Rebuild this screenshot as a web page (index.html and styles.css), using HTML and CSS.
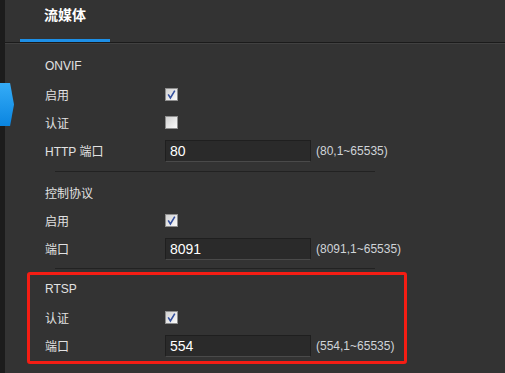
FILE: index.html
```html
<!doctype html>
<html>
<head>
<meta charset="utf-8">
<link rel="stylesheet" href="styles.css">
</head>
<body>
<div class="page">
	<div class="rail"></div>
	<div class="main">
		<div class="tabs">
			<div class="tab on">流媒体</div>
		</div>

		<div class="group first">
			<div class="row title">ONVIF</div>
			<div class="row">
				<span class="lbl">启用</span>
				<span class="chk"><svg width="13" height="13" viewBox="0 0 13 13"><defs><linearGradient id="g1" x1="0" y1="0" x2="1" y2="1"><stop offset="0" stop-color="#cfcfcf"/><stop offset="1" stop-color="#fdfdfd"/></linearGradient></defs><rect x="0.5" y="0.5" width="12" height="12" fill="url(#g1)" stroke="#8e8e8e"/><path d="M3.2 6.4 L5.4 10 L9.8 2.6" fill="none" stroke="#34509e" stroke-width="1.6"/></svg></span>
			</div>
			<div class="row">
				<span class="lbl">认证</span>
				<span class="chk"><svg width="13" height="13" viewBox="0 0 13 13"><rect x="0.5" y="0.5" width="12" height="12" fill="url(#g1)" stroke="#8e8e8e"/></svg></span>
			</div>
			<div class="row field">
				<span class="lbl">HTTP 端口</span>
				<input class="num" type="text" value="80">
				<span class="hint">(80,1~65535)</span>
			</div>
		</div>
		<div class="sep"></div>

		<div class="group">
			<div class="row title">控制协议</div>
			<div class="row">
				<span class="lbl">启用</span>
				<span class="chk"><svg width="13" height="13" viewBox="0 0 13 13"><rect x="0.5" y="0.5" width="12" height="12" fill="url(#g1)" stroke="#8e8e8e"/><path d="M3.2 6.4 L5.4 10 L9.8 2.6" fill="none" stroke="#34509e" stroke-width="1.6"/></svg></span>
			</div>
			<div class="row field">
				<span class="lbl">端口</span>
				<input class="num" type="text" value="8091">
				<span class="hint">(8091,1~65535)</span>
			</div>
		</div>
		<div class="sep"></div>

		<div class="group">
			<div class="row title">RTSP</div>
			<div class="row">
				<span class="lbl">认证</span>
				<span class="chk"><svg width="13" height="13" viewBox="0 0 13 13"><rect x="0.5" y="0.5" width="12" height="12" fill="url(#g1)" stroke="#8e8e8e"/><path d="M3.2 6.4 L5.4 10 L9.8 2.6" fill="none" stroke="#34509e" stroke-width="1.6"/></svg></span>
			</div>
			<div class="row field">
				<span class="lbl">端口</span>
				<input class="num" type="text" value="554">
				<span class="hint">(554,1~65535)</span>
			</div>
		</div>
	</div>
</div>

<div class="pin"></div>
<div class="mark"></div>
</body>
</html>
```

FILE: styles.css
```css
*{
	margin:0; padding:0; box-sizing:border-box;
}
html,body{
	width:505px; height:373px; overflow:hidden;
	background:#333;
	font-family:"Liberation Sans","Noto Sans CJK SC",sans-serif;
}
.page{
	display:flex; height:373px;
}
.rail{
	width:5px; background:#1c1c1c; flex:none;
}
.main{
	flex:1; background:#333;
}
.tabs{
	height:43px; display:flex; padding-left:15px;
	border-bottom:1px solid #1b1b1b;
	box-shadow:0 1px 0 #414141;
}
	.tab{
		width:90px; height:42px; padding-top:6px;
		text-align:center; font-size:14px; line-height:18px;
		font-weight:bold; color:#fff;
	}
	.tab.on{
		border-bottom:3px solid #1d8fe6;
	}

.group{
	padding:6px 0 5px 40px;
}
	.group.first{
		padding-top:9px; padding-bottom:6px;
	}
.sep{
	margin-left:50px; width:320px; height:1px; background:#222;
}
.row{
	display:flex; align-items:center; height:28px;
	font-size:12px; color:#e2e2e2;
}
	.row.field{
		height:29px;
	}
	.lbl{
		width:120px; flex:none;
	}
	.chk{
		width:13px; height:13px; display:block;
	}
	.chk svg{
		display:block;
	}
	.num{
		width:146px; height:22px; padding-left:4px;
		background:#2a2a2a; color:#fff;
		border:1px solid #1f1f1f; border-bottom-color:#4a4a4a;
		font-family:"Liberation Sans",sans-serif; font-size:14px;
		outline:none;
	}
	.hint{
		margin-left:5px; font-size:12px; color:#d0d4d8;
	}

.pin{
	position:absolute; left:0; top:83px; width:14px; height:43px;
	background:linear-gradient(#35acf7,#0a85e0);
	clip-path:polygon(0 0,72% 0,100% 50%,72% 100%,0 100%);
}
.mark{
	position:absolute; left:27px; top:272px; width:380px; height:92px;
	border:3px solid #f51d14; border-radius:3px;
}
```
